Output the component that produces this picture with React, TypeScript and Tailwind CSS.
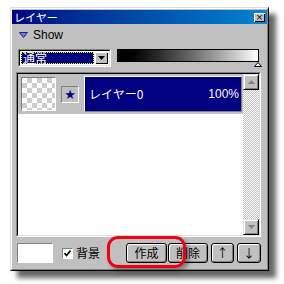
import React from 'react'

const jp = "font-['Noto_Sans_CJK_JP',sans-serif]"
const sans = "font-['Liberation_Sans','Noto_Sans_CJK_JP',sans-serif]"

function Btn({ label, w, className = '' }: { label: string; w: string; className?: string }) {
  return (
    <div
      className={`${w} h-[20px] rounded-[3px] border border-black bg-[#c0c0c0] shadow-[inset_1px_1px_#fff,inset_-1px_-1px_#808080] flex items-center justify-center text-[12px] leading-none text-black ${jp} ${className}`}
    >
      {label}
    </div>
  )
}

export default function App() {
  return (
    <div className="w-[284px] h-[284px] bg-white pt-[7px] pl-[10px] overflow-hidden">
      <div className="relative w-[259px] h-[264px] bg-[#c0c0c0] border border-t-[#dfdfdf] border-l-[#dfdfdf] border-r-black border-b-black shadow-[7px_7px_5px_rgba(0,0,0,0.6)]">
        <div className="h-full border border-t-white border-l-white border-r-[#808080] border-b-[#808080] pt-[1px] flex flex-col">
          {/* Title bar */}
          <div className="h-[14px] bg-gradient-to-r from-[#000080] to-[#1084d0] flex items-center justify-between pl-[2px] pr-[2px]">
            <span className={`text-[11px] leading-none text-white ${jp}`}>レイヤー</span>
            <div className="w-[11px] h-[9px] bg-[#c0c0c0] shadow-[inset_1px_1px_#fff,inset_-1px_-1px_#000] flex items-center justify-center text-[9px] leading-none text-black font-['DejaVu_Sans',sans-serif]">
              ×
            </div>
          </div>

          {/* Show toggle */}
          <div className="mt-[4px] h-[14px] flex items-center pl-[7px] gap-[5px]">
            <svg width="9" height="6" viewBox="0 0 9 6">
              <path d="M0.5 0.5 H8.5 L4.5 5.5 Z" fill="#6b7df0" stroke="#1a237e" strokeWidth="1" />
            </svg>
            <span className={`text-[12px] leading-none text-black ${sans}`}>Show</span>
          </div>

          {/* Blend mode + opacity gradient */}
          <div className="mt-[7px] flex items-start pl-[6px] gap-[6px]">
            <div className="w-[93px] h-[18px] bg-white border border-t-[#808080] border-l-[#808080] border-r-white border-b-white flex">
              <div className="flex-1 border border-t-black border-l-black border-r-[#dfdfdf] border-b-[#dfdfdf] p-[1px] flex">
                <div className="flex-1 bg-[#000080] outline outline-1 outline-dotted outline-[#ffff00] -outline-offset-1 flex items-center pl-[2px]">
                  <span className={`text-[12px] leading-none text-white ${jp}`}>通常</span>
                </div>
                <div className="w-[13px] ml-[1px] bg-[#c0c0c0] shadow-[inset_1px_1px_#fff,inset_-1px_-1px_#000] flex items-center justify-center">
                  <svg width="7" height="4" viewBox="0 0 7 4">
                    <path d="M0 0 H7 L3.5 4 Z" fill="#000" />
                  </svg>
                </div>
              </div>
            </div>
            <div className="flex flex-col items-end">
              <div className="w-[142px] h-[13px] border border-black bg-gradient-to-r from-black to-white" />
              <svg width="8" height="5" viewBox="0 0 8 5" className="-mr-[3px]">
                <path d="M4 0.5 L7.5 4.5 H0.5 Z" fill="#fff" stroke="#000" strokeWidth="1" />
              </svg>
            </div>
          </div>

          {/* Layer list */}
          <div className="ml-[4px] mt-[5px] w-[245px] h-[165px] border border-t-[#808080] border-l-[#808080] border-r-white border-b-white">
            <div className="h-full border border-t-black border-l-black border-r-[#dfdfdf] border-b-[#dfdfdf] flex bg-white">
              <div className="flex-1 flex flex-col">
                <div className="h-[40px] bg-[#c0c0c0] flex items-center pl-[3px] gap-[5px]">
                  <div className="w-[35px] h-[34px] border border-t-[#808080] border-l-[#808080] border-r-white border-b-white bg-[conic-gradient(#cccccc_25%,#ffffff_0_50%,#cccccc_0_75%,#ffffff_0)] bg-[length:10px_10px]" />
                  <div className="w-[18px] h-[17px] border border-t-[#808080] border-l-[#808080] border-r-white border-b-white flex items-center justify-center text-[13px] leading-none text-[#000080] font-['DejaVu_Sans',sans-serif]">
                    ★
                  </div>
                  <div className="flex-1 h-[36px] mr-[1px] border border-t-white border-l-white border-r-[#808080] border-b-[#808080] bg-[#000080] flex items-center justify-between pl-[4px] pr-[2px]">
                    <span className={`text-[12px] leading-none text-white ${jp}`}>レイヤー0</span>
                    <span className={`text-[12px] leading-none text-white ${sans}`}>100%</span>
                  </div>
                </div>
              </div>
              {/* Scrollbar */}
              <div className="w-[16px] flex flex-col bg-[conic-gradient(#ffffff_25%,#c0c0c0_0_50%,#ffffff_0_75%,#c0c0c0_0)] bg-[length:2px_2px]">
                <div className="h-[16px] bg-[#c0c0c0] border border-t-[#dfdfdf] border-l-[#dfdfdf] border-r-black border-b-black shadow-[inset_1px_1px_#fff,inset_-1px_-1px_#808080] flex items-center justify-center">
                  <svg width="7" height="4" viewBox="0 0 7 4">
                    <path d="M3.5 0 L7 4 H0 Z" fill="#808080" />
                  </svg>
                </div>
                <div className="flex-1" />
                <div className="h-[16px] bg-[#c0c0c0] border border-t-[#dfdfdf] border-l-[#dfdfdf] border-r-black border-b-black shadow-[inset_1px_1px_#fff,inset_-1px_-1px_#808080] flex items-center justify-center">
                  <svg width="7" height="4" viewBox="0 0 7 4">
                    <path d="M0 0 H7 L3.5 4 Z" fill="#808080" />
                  </svg>
                </div>
              </div>
            </div>
          </div>

          {/* Bottom controls */}
          <div className="mt-[6px] flex items-center pl-[5px]">
            <div className="w-[36px] h-[20px] bg-white border border-t-[#808080] border-l-[#808080] border-r-white border-b-white" />
            <div className="ml-[9px] w-[11px] h-[11px] bg-white border border-t-[#808080] border-l-[#808080] border-r-white border-b-white flex items-center justify-center">
              <svg width="7" height="7" viewBox="0 0 7 7">
                <path d="M0.5 3 L2.5 5.5 L6.5 0.5" fill="none" stroke="#000" strokeWidth="1.6" />
              </svg>
            </div>
            <span className={`ml-[3px] text-[12px] leading-none text-black ${jp}`}>背景</span>
            <Btn label="作成" w="w-[41px]" className="ml-[26px]" />
            <Btn label="削除" w="w-[40px]" className="ml-[1px]" />
            <Btn label="↑" w="w-[23px]" className="ml-[3px]" />
            <Btn label="↓" w="w-[24px]" className="ml-[3px]" />
          </div>
        </div>

        {/* Red annotation around the create button */}
        <div className="absolute left-[96px] top-[228px] w-[79px] h-[32px] rounded-[11px] border-[3px] border-[#ee0010] shadow-[3px_3px_4px_rgba(0,0,0,0.35)]" />
      </div>
    </div>
  )
}
